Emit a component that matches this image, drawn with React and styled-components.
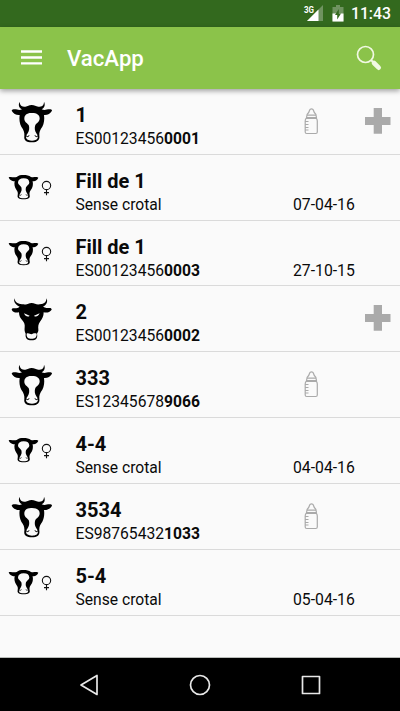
import React from 'react';
import styled, { createGlobalStyle } from 'styled-components';

const GlobalStyle = createGlobalStyle`
  * {
    box-sizing: border-box;
  }

  body {
    margin: 0;
    background: #fafafa;
    font-family: Roboto, sans-serif;
    color: #0a0a0a;
  }
`;

const Screen = styled.div`
  display: flex;
  flex-direction: column;
  width: 100%;
  height: 711px;
  overflow: hidden;
`;

const StatusBar = styled.div`
  display: flex;
  flex: none;
  align-items: center;
  justify-content: flex-end;
  height: 26.6px;
  padding-right: 9px;
  background: #33691e;
  color: white;
`;

const Network = styled.svg`
  width: 21px;
  height: 18px;
  margin-right: 8px;
`;

const Battery = styled.svg`
  width: 12px;
  height: 18px;
  margin-right: 7px;
`;

const Clock = styled.span`
  padding-top: 1px;
  font-size: 15.8px;
  font-weight: 500;
  line-height: 27px;
`;

const Toolbar = styled.header`
  display: flex;
  flex: none;
  align-items: center;
  height: 62.2px;
  padding: 0 18px 0 21px;
  background: #8bc34a;
  box-shadow: 0 2px 5px rgba(0, 0, 0, 0.36);
  z-index: 1;
`;

const MenuIcon = styled.svg`
  width: 21px;
  height: 15px;
`;

const AppTitle = styled.h1`
  flex: 1;
  margin: 1px 0 0 25px;
  color: white;
  font-size: 22.2px;
  font-weight: 500;
`;

const SearchIcon = styled.svg`
  width: 26px;
  height: 26px;
`;

const List = styled.ul`
  flex: 1;
  margin: 0;
  padding: 0;
  list-style: none;
  border-bottom: 1px solid #b9bcb9;
`;

const Row = styled.li`
  display: grid;
  grid-template-columns: 75.5px 217.5px 1fr 35px;
  height: 65.86px;
  border-bottom: 1px solid #dadada;
`;

const AnimalIcon = styled.svg`
  display: block;
  width: ${props => (props.$small ? 45 : 42)}px;
  height: ${props => (props.$small ? 27 : 44)}px;
  margin: ${props => (props.$small ? '19px 0 0 8px' : '12px 0 0 11.3px')};
`;

const Name = styled.h2`
  margin: 14px 0 0;
  font-size: 20px;
  font-weight: 700;
  line-height: 24px;
`;

const Tag = styled.p`
  margin: 2px 0 0;
  font-size: 15.65px;
  line-height: 20px;
`;

const Birth = styled.span`
  align-self: end;
  padding-bottom: 4.86px;
  font-size: 15.75px;
  line-height: 20px;
`;

const BottleIcon = styled.svg`
  width: 15px;
  height: 27px;
  margin: 19px 0 0 11px;
`;

const PlusIcon = styled.svg`
  grid-column: 4;
  width: 26px;
  height: 26px;
  margin-top: 19px;
`;

const NavBar = styled.nav`
  display: flex;
  flex: none;
  justify-content: space-between;
  height: 53px;
  padding: 15px 79px 0;
  background: black;
`;

const NavIcon = styled.svg`
  width: 22px;
  height: 24px;
  fill: none;
  stroke: #e8e8e8;
  stroke-width: 1.7;
  stroke-linejoin: round;
`;

const animals = [
  { kind: 'cow', name: '1', tag: 'ES00123456', end: '0001', nursing: true, plus: true },
  { kind: 'calf', name: 'Fill de 1', tag: 'Sense crotal', birth: '07-04-16' },
  { kind: 'calf', name: 'Fill de 1', tag: 'ES00123456', end: '0003', birth: '27-10-15' },
  { kind: 'bull', name: '2', tag: 'ES00123456', end: '0002', plus: true },
  { kind: 'cow', name: '333', tag: 'ES12345678', end: '9066', nursing: true },
  { kind: 'calf', name: '4-4', tag: 'Sense crotal', birth: '04-04-16' },
  { kind: 'cow', name: '3534', tag: 'ES98765432', end: '1033', nursing: true },
  { kind: 'calf', name: '5-4', tag: 'Sense crotal', birth: '05-04-16' },
];

const Cow = () => (
  <AnimalIcon viewBox="34 18 126 132">
    <path d="M60 20C60 31 67 35 77 35C85 34 87 30 96 30C105 30 108 34 116 35C127 35 133 31 133 20C138 31 134 38 126 43C135 47 141 43 149 43C154 43 157 44 157 47C152 56 143 61 133 60C135 73 133 86 128 95C121 104 118 112 119 122C121 134 114 142 97 142C79 142 72 135 74 123C75 112 72 104 65 95C60 86 58 73 60 60C50 61 41 56 36 47C37 44 40 43 45 43C53 43 58 47 67 43C58 38 55 30 60 20Z" />
    <path
      fill="#fafafa"
      d="M97 54C82 53 74 60 74 71C74 81 83 84 87 90C90 97 89 108 84 115C74 128 80 137 97 137C113 137 120 128 110 115C105 108 104 97 107 90C111 84 120 81 120 70C120 60 112 54 97 54Z"
    />
    <path fill="none" stroke="#000" strokeWidth="3" d="M79 122C82 127 88 125 88 121M115 122C112 127 106 125 106 121" />
  </AnimalIcon>
);

const Bull = () => (
  <AnimalIcon viewBox="34 26 126 132">
    <path d="M44 27C47 40 55 44 67 45C79 46 82 45 86 43C91 40 101 40 106 43C112 46 116 46 126 44C136 42 139 38 141 27C145 39 140 47 130 52C138 56 143 56 150 56C154 56 156 58 156 61C150 69 142 71 132 69C132 80 128 89 121 97C116 104 115 111 116 120C117 126 114 130 112 133C115 146 109 153 96 153C82 153 76 146 78 133C75 128 74 122 75 114C76 106 74 100 69 94C62 87 58 80 58 69C49 71 41 70 36 61C37 57 40 56 45 57C52 57 56 55 60 52C49 47 41 39 44 27Z" />
    <path fill="#fafafa" d="M73 72L90 79C86 84 77 82 73 72ZM120 72L103 79C107 84 115 82 120 72ZM81 133C86 130 91 134 95 135C100 133 105 130 111 133C112 144 105 148 96 148C86 148 80 144 81 133Z" />
  </AnimalIcon>
);

const Calf = () => (
  <AnimalIcon $small viewBox="24 42 135 81">
    <path d="M26 52C34 49 40 54 50 51C56 46 62 45 71 45C80 45 87 47 93 51C101 54 106 49 115 53C112 61 104 65 98 63C100 75 98 83 93 89C88 95 88 101 89 106C91 114 85 118 71 118C57 118 51 114 53 106C54 99 54 95 49 89C44 82 42 74 44 63C37 65 29 61 26 52Z" />
    <path
      fill="#fafafa"
      d="M71 55C60 55 54 60 54 68C54 74 62 76 64 82C66 89 65 95 60 101C54 110 58 115 71 115C83 115 88 110 82 101C77 95 76 89 78 82C80 76 88 74 88 68C88 59 82 55 71 55Z"
    />
    <path fill="none" stroke="#000" strokeWidth="2" d="M57 104C59 107 64 107 64 103M84 104C82 107 78 107 78 103" />
    <path fill="none" stroke="#111" strokeWidth="3.3" d="M139.5 89V106M132 98H147" />
    <circle fill="none" stroke="#111" strokeWidth="3.3" cx="139.5" cy="76.5" r="12.5" />
  </AnimalIcon>
);

const icons = { cow: Cow, bull: Bull, calf: Calf };

const Bottle = () => (
  <BottleIcon viewBox="0 0 15 27" fill="none" stroke="#aaa" strokeWidth="1.2" strokeLinejoin="round">
    <path d="M3.2 6.2C4.5 5.2 5.3 3.5 5.7 2C6.1.4 8.9.4 9.3 2C9.7 3.5 10.5 5.2 11.8 6.2L12.5 9.5H2.5Z" />
    <path d="M3 7.2H12M2.5 10C1.3 11 1.2 12 1.2 13V24Q1.2 25.5 2.7 25.5H11.8Q13.3 25.5 13.3 24V13C13.3 12 13.2 11 12 10M1.5 10.5H13M1.5 13.5H4.5M1.5 16.5H4.5M1.5 19.5H4.5M1.5 22H4.5" />
  </BottleIcon>
);

const AnimalRow = ({ animal }) => {
  const Icon = icons[animal.kind];

  return (
    <Row>
      <Icon />
      <div>
        <Name>{animal.name}</Name>
        <Tag>
          {animal.tag}
          {animal.end && <b>{animal.end}</b>}
        </Tag>
      </div>
      {animal.birth && <Birth>{animal.birth}</Birth>}
      {animal.nursing && <Bottle />}
      {animal.plus && (
        <PlusIcon viewBox="0 0 26 26">
          <path fill="#aaa" d="M8.7 0H17V9H25.5V17H17V25.7H8.7V17H0V9H8.7Z" />
        </PlusIcon>
      )}
    </Row>
  );
};

const App = () => (
  <>
    <GlobalStyle />
    <Screen>
      <StatusBar>
        <Network viewBox="0 0 21 18">
          <path fill="#6f9360" d="M20 1V17H4Z" />
          <path fill="white" d="M15.5 5.5V17H4Z" />
          <text x="1" y="8.5" fill="white" fontSize="9" fontWeight="700" textLength="10" lengthAdjust="spacingAndGlyphs">3G</text>
        </Network>
        <Battery viewBox="0 0 12 18">
          <path fill="#6f9360" d="M4 1H8V3H11.5V17.5H.5V3H4Z" />
          <path fill="white" d="M.5 9.5H11.5V17.5H.5Z" />
          <path fill="#33691e" d="M6.8 5V9.5H9L5.2 15.5V11H3Z" />
        </Battery>
        <Clock>11:43</Clock>
      </StatusBar>
      <Toolbar>
        <MenuIcon viewBox="0 0 21 15" stroke="white" strokeWidth="2.4">
          <path d="M0 1.5H21M0 7.5H21M0 13.4H21" />
        </MenuIcon>
        <AppTitle>VacApp</AppTitle>
        <SearchIcon viewBox="0 0 26 26" fill="none" stroke="#f1f8e3">
          <circle cx="9.5" cy="9.5" r="8" strokeWidth="1.7" />
          <path d="M15 15L18 18" strokeWidth="2" />
          <path d="M18 18L22.7 22.7" strokeWidth="4.6" strokeLinecap="round" />
        </SearchIcon>
      </Toolbar>
      <List>
        {animals.map((animal, i) => (
          <AnimalRow key={i} animal={animal} />
        ))}
      </List>
      <NavBar>
        <NavIcon viewBox="0 0 22 24">
          <path d="M18 2.5V21.5L2 12Z" />
        </NavIcon>
        <NavIcon viewBox="0 0 22 24">
          <circle cx="11" cy="12" r="9.5" />
        </NavIcon>
        <NavIcon viewBox="0 0 22 24">
          <path d="M3.5 3.5H20.5V20.5H3.5Z" />
        </NavIcon>
      </NavBar>
    </Screen>
  </>
);

export default App;
